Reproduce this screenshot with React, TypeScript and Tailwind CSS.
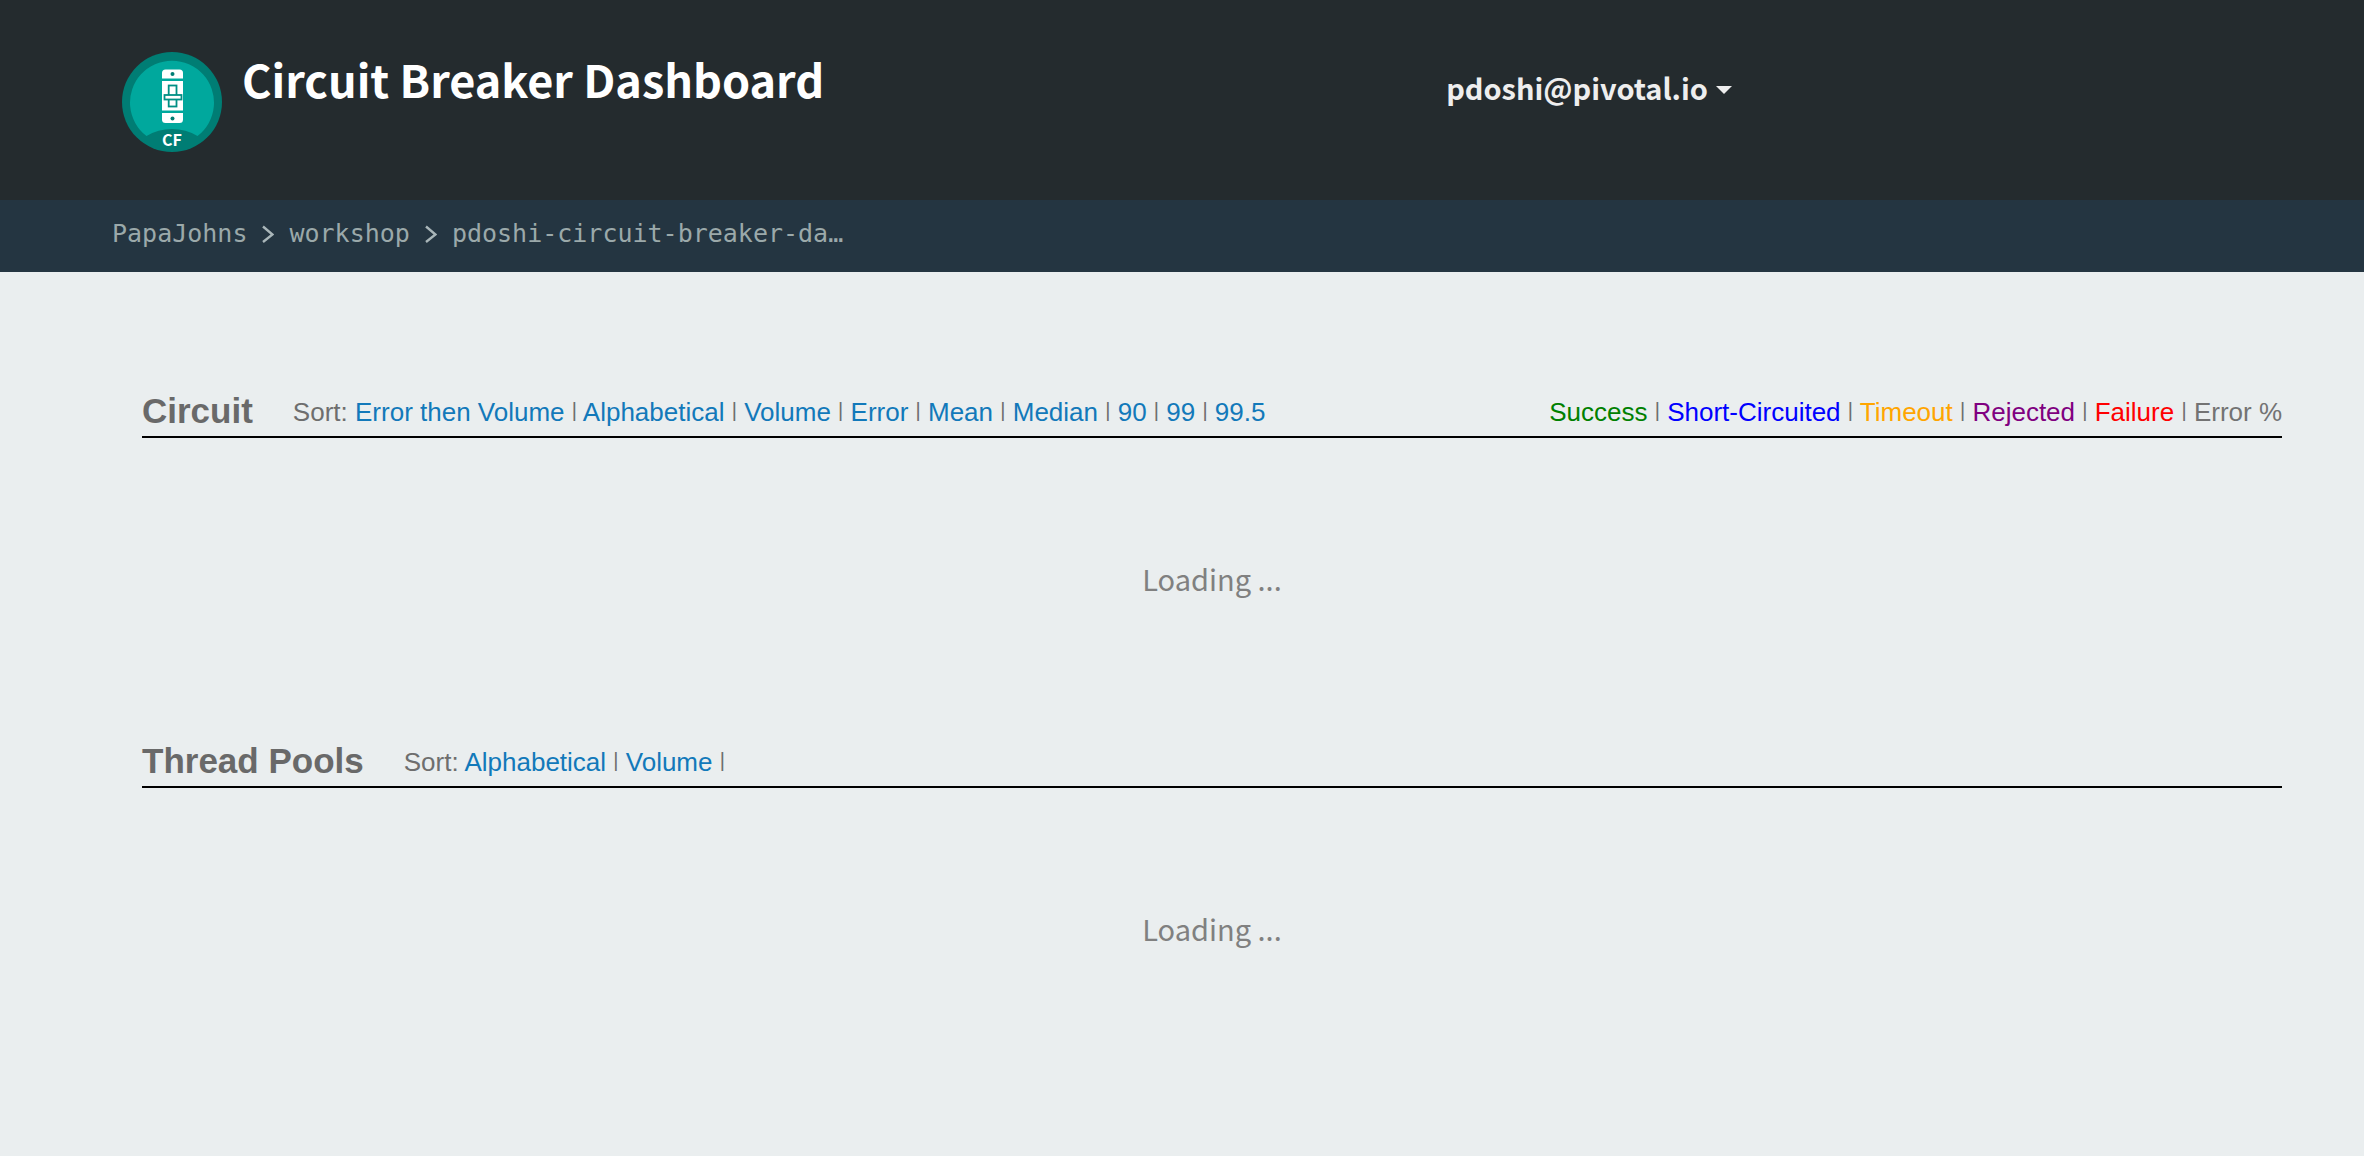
import { Fragment, type ReactNode } from "react";

const circuitSorts = [
  "Error then Volume",
  "Alphabetical",
  "Volume",
  "Error",
  "Mean",
  "Median",
  "90",
  "99",
  "99.5",
];

const legend = [
  { label: "Success", color: "text-[#008000]" },
  { label: "Short-Circuited", color: "text-[#0000ff]" },
  { label: "Timeout", color: "text-[#ffa500]" },
  { label: "Rejected", color: "text-[#800080]" },
  { label: "Failure", color: "text-[#ff0000]" },
  { label: "Error %", color: "text-[#737373]" },
];

function Logo() {
  return (
    <svg viewBox="0 0 100 100" className="mt-[3px] size-[100px] shrink-0" aria-hidden="true">
      <circle cx="50" cy="50" r="50" fill="#007d74" />
      <path d="M24.5 84A42 42 0 1 1 75.500 84Q64 77 50 77T24.500 84Z" fill="#00a89d" />
      <path d="M40 26.500V21Q40 17.500 43.500 17.500H57.500Q61 17.500 61 21V26.500Z" fill="#fff" />
      <rect x="40" y="29" width="21" height="29.500" fill="#fff" />
      <path d="M40 61H61V67.500Q61 71 57.500 71H43.500Q40 71 40 67.500Z" fill="#fff" />
      <circle cx="50.500" cy="22" r="2" fill="#007d74" />
      <circle cx="50.500" cy="66.500" r="2" fill="#007d74" />
      <rect x="46.700" y="33.500" width="7.800" height="21" fill="#fff" stroke="#008f85" strokeWidth="1.800" />
      <rect x="42.500" y="43" width="17" height="4.500" fill="#fff" stroke="#008f85" strokeWidth="1.800" />
      <text
        x="50"
        y="94"
        textAnchor="middle"
        fill="#fff"
        fontSize="16"
        fontWeight="700"
        fontFamily="'Noto Sans CJK SC', sans-serif"
      >
        CF
      </text>
    </svg>
  );
}

function Chevron() {
  return (
    <svg viewBox="0 0 12 18" className="mx-[15px] h-[18px] w-3 shrink-0" fill="none" aria-hidden="true">
      <path d="M1 1.500L10.500 9.500L1 17" stroke="#a9b6b9" strokeWidth="2.400" />
    </svg>
  );
}

function Divider() {
  return (
    <>
      {" "}
      <span className="inline-block align-text-top text-xl leading-[26px]">|</span>{" "}
    </>
  );
}

function SortLinks({ items, trailing = false }: { items: string[]; trailing?: boolean }) {
  return (
    <p className="pt-0.5">
      Sort:{" "}
      {items.map((item, i) => (
        <Fragment key={item}>
          <a href="#" className="text-[#1279ba]">
            {item}
          </a>
          {(trailing || i < items.length - 1) && <Divider />}
        </Fragment>
      ))}
    </p>
  );
}

function Section({ title, sort, aside }: { title: string; sort: ReactNode; aside?: ReactNode }) {
  return (
    <section className="h-[350px]">
      <div className="flex items-center border-b-2 border-black pb-1 text-[26px] leading-10 text-[#6e6e6e]">
        <h2 className="mr-10 text-[35px] leading-10 font-bold text-[#696969]">{title}</h2>
        {sort}
        {aside}
      </div>
      <p className="pt-[120px] text-center font-['Noto_Sans_CJK_SC',sans-serif] text-[29px] leading-10 text-[#808080]">
        Loading ...
      </p>
    </section>
  );
}

export default function App() {
  return (
    <div className="min-h-screen bg-[#eaeeef] font-['Liberation_Sans',sans-serif]">
      <header className="h-[200px] bg-[#242b2e] font-['Noto_Sans_CJK_SC',sans-serif]">
        <div className="flex max-w-[1732px] justify-between pt-[49px] pl-[122px]">
          <div className="flex gap-5">
            <Logo />
            <h1 className="text-[45px] leading-[60px] font-bold text-white">Circuit Breaker Dashboard</h1>
          </div>
          <button className="flex h-[76px] items-center gap-2 text-[29px] leading-10 font-bold text-[#eeeeee]">
            pdoshi@pivotal.io
            <svg viewBox="0 0 16 8" className="mt-1.5 h-2 w-4" aria-hidden="true">
              <path d="M0 0H16L8 8Z" fill="#eee" />
            </svg>
          </button>
        </div>
      </header>
      <nav
        aria-label="Breadcrumb"
        className="flex h-[72px] items-center bg-[#243541] pb-1 pl-28 font-['DejaVu_Sans_Mono',monospace] text-[25px] leading-10 text-[#9ba9aa]"
      >
        <a href="#">PapaJohns</a>
        <Chevron />
        <a href="#">workshop</a>
        <Chevron />
        <a href="#">pdoshi-circuit-breaker-da…</a>
      </nav>
      <main className="pt-[118px] pr-[82px] pl-[142px]">
        <Section
          title="Circuit"
          sort={<SortLinks items={circuitSorts} />}
          aside={
            <p className="ml-auto pt-0.5">
              {legend.map((entry, i) => (
                <Fragment key={entry.label}>
                  <span className={entry.color}>{entry.label}</span>
                  {i < legend.length - 1 && <Divider />}
                </Fragment>
              ))}
            </p>
          }
        />
        <Section title="Thread Pools" sort={<SortLinks items={["Alphabetical", "Volume"]} trailing />} />
      </main>
    </div>
  );
}
